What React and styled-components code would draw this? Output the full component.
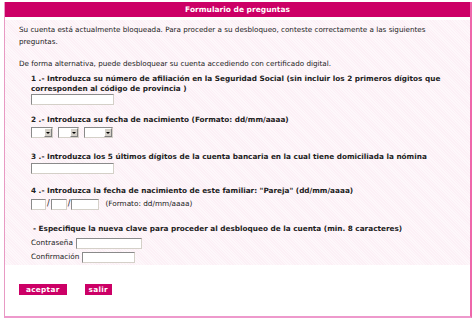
import React from "react";
import styled, { createGlobalStyle } from "styled-components";

const Global = createGlobalStyle`
  body {
    margin: 0;
    background: #ffffff;
    font-family: "DejaVu Sans", Verdana, sans-serif;
    color: #222;
  }
`;

const Panel = styled.div`
  margin: 2px 3px 0 4px;
  height: 314px;
  border-left: 1px solid #e89ac4;
  border-right: 2px solid #ee66aa;
  border-bottom: 2px solid #ee99cc;
  display: flex;
  flex-direction: column;
`;

const Header = styled.div`
  height: 15px;
  background: #cc0066;
  color: #ffffff;
  font-weight: bold;
  font-size: 7.5px;
  line-height: 15px;
  text-align: center;
`;

const Body = styled.div`
  margin-top: 3px;
  height: 245px;
  background-color: #fcf0f6;
  background-image: repeating-linear-gradient(
    45deg,
    rgba(255, 255, 255, 0.5) 0 1px,
    transparent 1px 2px
  );
  padding: 4px 0 0 14px;
  box-sizing: border-box;
  font-size: 7.2px;
  line-height: 12px;
`;

const Para = styled.p`
  margin: ${(p) => p.$top || 0}px 0 ${(p) => p.$gap || 0}px 0;
  width: 430px;
`;

const Question = styled.div`
  margin-left: ${(p) => p.$indent || 12}px;
  margin-bottom: ${(p) => p.$gap || 0}px;
`;

const Label = styled.div`
  font-weight: bold;
  font-size: 7.3px;
  line-height: 10px;
  width: 430px;
`;

const TextBox = styled.div`
  width: ${(p) => p.$w}px;
  height: 11px;
  box-sizing: border-box;
  background: #fff;
  border: 1px solid #8a8a8a;
  border-right-color: #d4d0c8;
  border-bottom-color: #d4d0c8;
  flex: none;
`;

const Field = styled.div`
  margin-top: ${(p) => p.$top || 0}px;
  display: flex;
  align-items: center;
  gap: ${(p) => p.$gap || 0}px;
`;

const Select = styled.div`
  width: ${(p) => p.$w}px;
  height: 11px;
  box-sizing: border-box;
  background: #fff;
  border: 1px solid #8a8a8a;
  border-right-color: #d4d0c8;
  border-bottom-color: #d4d0c8;
  display: flex;
  justify-content: flex-end;
  flex: none;
`;

const Arrow = styled.div`
  width: 8px;
  height: 9px;
  box-sizing: border-box;
  background: #d4d0c8;
  border: 1px solid;
  border-color: #fff #808080 #808080 #fff;
  display: flex;
  align-items: center;
  justify-content: center;
  &::after {
    content: "";
    border-left: 2px solid transparent;
    border-right: 2px solid transparent;
    border-top: 2px solid #000;
  }
`;

const Slash = styled.span`
  font-size: 8px;
  padding: 0 1px;
`;

const Hint = styled.span`
  margin-left: 6px;
  font-size: 7.3px;
`;

const Row = styled.div`
  display: flex;
  align-items: center;
  gap: 3px;
  margin-top: ${(p) => p.$top || 3}px;
  font-size: 7.3px;
`;

const Footer = styled.div`
  display: flex;
  gap: 18px;
  padding: 19px 0 0 14px;
`;

const Button = styled.div`
  background: #cc0066;
  color: #fff;
  font-weight: bold;
  font-size: 7.3px;
  height: 11px;
  line-height: 11px;
  padding: 0 ${(p) => p.$pad}px;
  letter-spacing: 0.3px;
`;

function Sel({ w }) {
  return (
    <Select $w={w}>
      <Arrow />
    </Select>
  );
}

export default function App() {
  return (
    <>
      <Global />
      <Panel>
        <Header>Formulario de preguntas</Header>
        <Body>
          <Para>
            Su cuenta está actualmente bloqueada. Para proceder a su desbloqueo,
            conteste correctamente a las siguientes preguntas.
          </Para>
          <Para $top={10} $gap={4}>
            De forma alternativa, puede desbloquear su cuenta accediendo con
            certificado digital.
          </Para>
          <Question $gap={10}>
            <Label>
              1 .- Introduzca su número de afiliación en la Seguridad Social (sin
              incluir los 2 primeros dígitos que corresponden al código de
              provincia )
            </Label>
            <Field>
              <TextBox $w={83} />
            </Field>
          </Question>
          <Question $gap={14}>
            <Label>2 .- Introduzca su fecha de nacimiento (Formato: dd/mm/aaaa)</Label>
            <Field $top={2} $gap={5}>
              <Sel w={22} />
              <Sel w={21} />
              <Sel w={29} />
            </Field>
          </Question>
          <Question $gap={12}>
            <Label>
              3 .- Introduzca los 5 últimos dígitos de la cuenta bancaria en la
              cual tiene domiciliada la nómina
            </Label>
            <Field $top={1}>
              <TextBox $w={83} />
            </Field>
          </Question>
          <Question $gap={14}>
            <Label>
              4 .- Introduzca la fecha de nacimiento de este familiar: "Pareja"
              (dd/mm/aaaa)
            </Label>
            <Field $top={2}>
              <TextBox $w={15} />
              <Slash>/</Slash>
              <TextBox $w={16} />
              <Slash>/</Slash>
              <TextBox $w={28} />
              <Hint>(Formato: dd/mm/aaaa)</Hint>
            </Field>
          </Question>
          <Question $indent={14}>
            <Label>
              - Especifique la nueva clave para proceder al desbloqueo de la
              cuenta (min. 8 caracteres)
            </Label>
          </Question>
          <Question>
            <Row $top={3}>
              Contraseña <TextBox $w={66} />
            </Row>
            <Row $top={2}>
              Confirmación <TextBox $w={53} />
            </Row>
          </Question>
        </Body>
        <Footer>
          <Button $pad={7}>aceptar</Button>
          <Button $pad={4}>salir</Button>
        </Footer>
      </Panel>
    </>
  );
}
